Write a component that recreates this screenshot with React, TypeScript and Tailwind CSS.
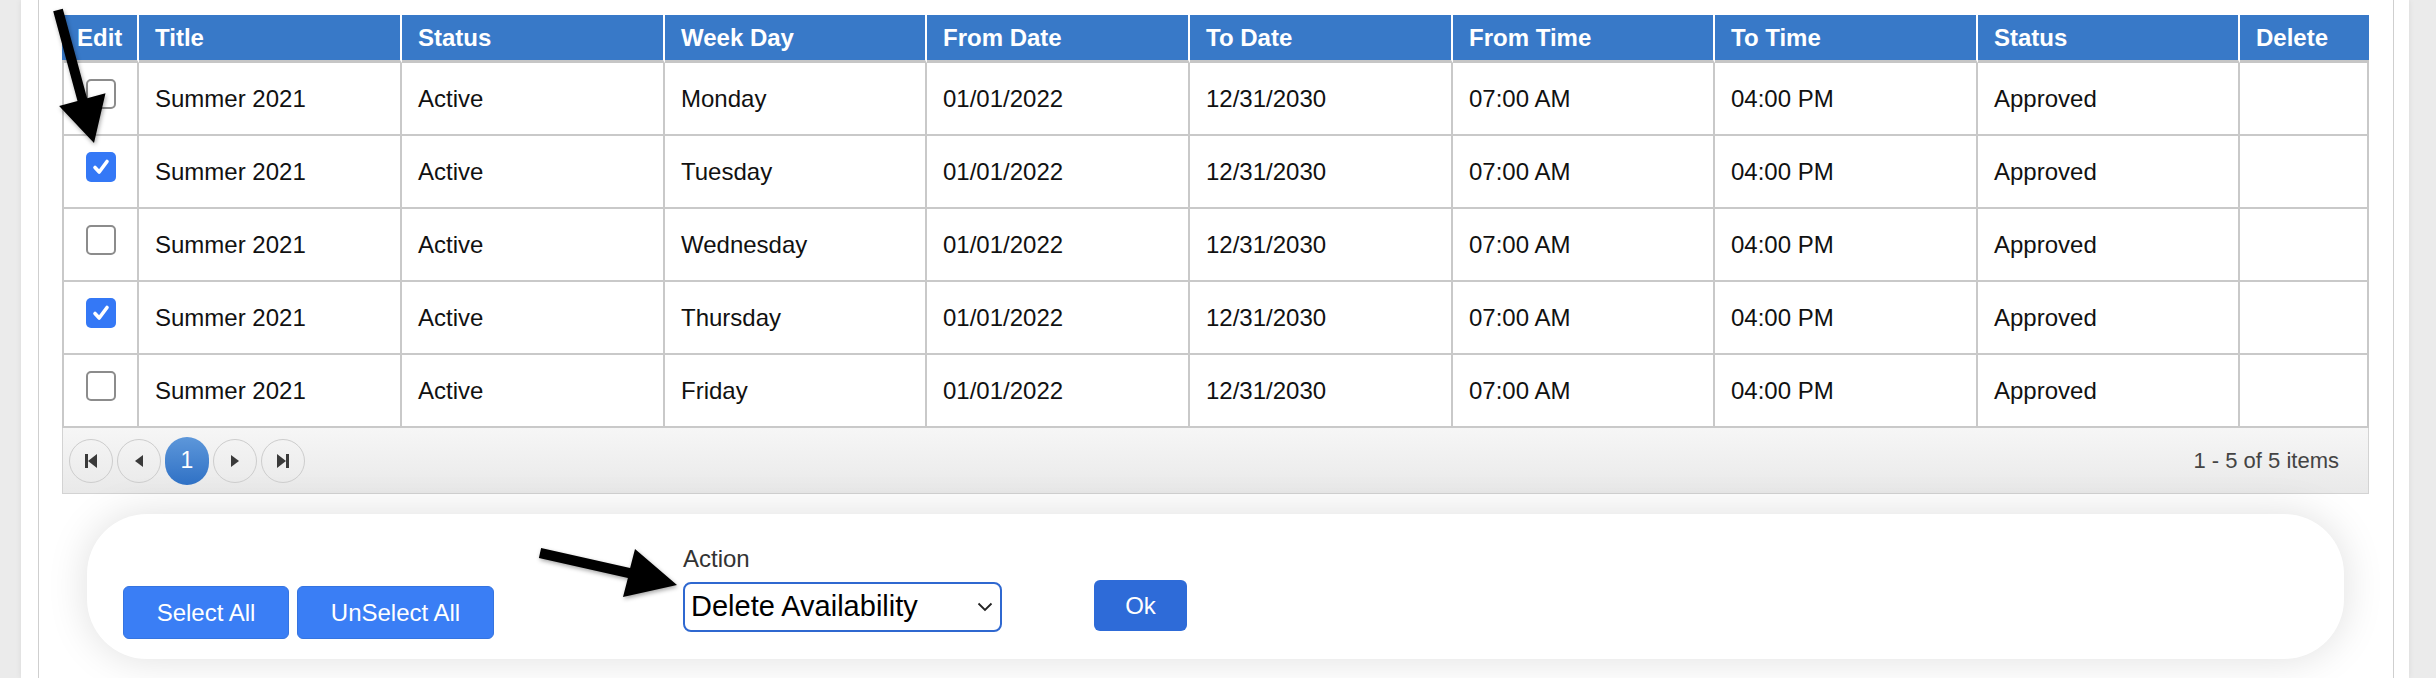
import React from 'react';

const FONT = "font-['Liberation_Sans','Helvetica_Neue',Arial,sans-serif]";

interface Row {
  checked: boolean;
  day: string;
}

const rows: Row[] = [
  { checked: false, day: 'Monday' },
  { checked: true, day: 'Tuesday' },
  { checked: false, day: 'Wednesday' },
  { checked: true, day: 'Thursday' },
  { checked: false, day: 'Friday' },
];

const headers = ['Edit', 'Title', 'Status', 'Week Day', 'From Date', 'To Date', 'From Time', 'To Time', 'Status', 'Delete'];
const widths = [77, 263, 263, 262, 263, 263, 262, 263, 262, 129];

const Checkbox: React.FC<{ checked: boolean }> = ({ checked }) =>
  checked ? (
    <span className="w-[30px] h-[30px] rounded-[5px] bg-[#3478f6] flex items-center justify-center">
      <svg width="20" height="20" viewBox="0 0 20 20">
        <path d="M4 10.5 L8.2 15 L16 4.5" fill="none" stroke="white" strokeWidth="3.6" strokeLinecap="round" strokeLinejoin="round" />
      </svg>
    </span>
  ) : (
    <span className="w-[30px] h-[30px] rounded-[5px] bg-white border-2 border-[#8c8c8c]" />
  );

const PagerButton: React.FC<{ children: React.ReactNode }> = ({ children }) => (
  <span className="w-[44px] h-[44px] rounded-full border border-[#cdcdcd] flex items-center justify-center">
    {children}
  </span>
);

const Arrows: React.FC = () => (
  <svg className="absolute left-0 top-0 pointer-events-none" width="2436" height="678" viewBox="0 0 2436 678">
    <g fill="#000" style={{ filter: 'drop-shadow(1px 2px 2px rgba(0,0,0,0.35))' }}>
      <polygon points="62.8,8.7 53.2,11.3 77.5,100.9 59.1,105.9 94,143 105.5,93.3 87.1,98.3" />
      <polygon points="541.1,548.1 538.9,557.9 627.9,577.9 623,597 677,585 635,549 630.1,568.1" />
    </g>
  </svg>
);

export default function App() {
  return (
    <div className={`relative w-[2436px] h-[678px] overflow-hidden bg-[#ebebeb] pl-[21px] pr-[27px] ${FONT}`}>
      <div className="h-full bg-white pl-[17px] pr-[15px] shadow-[0_0_6px_rgba(0,0,0,0.08)]">
        <div className="h-full border-x border-[#cfcfcf] pl-[23px] pr-[24px] pt-[15px]">
          {/* grid */}
          <table className="w-[2307px] table-fixed border-separate border-spacing-0">
            <colgroup>
              {widths.map((w, i) => (
                <col key={i} style={{ width: w }} />
              ))}
            </colgroup>
            <thead>
              <tr>
                {headers.map((h, i) => (
                  <th
                    key={i}
                    className={`h-[48px] bg-[#3879c8] text-white font-bold text-[24px] text-left align-middle pt-[1px] border-b-[3px] border-b-[#c6c6c6] ${
                      i === 0 ? 'pl-[15px]' : 'pl-[16px]'
                    } ${i < headers.length - 1 ? 'border-r-2 border-r-white' : ''}`}
                  >
                    {h}
                  </th>
                ))}
              </tr>
            </thead>
            <tbody>
              {rows.map((r, ri) => {
                const cells = ['Summer 2021', 'Active', r.day, '01/01/2022', '12/31/2030', '07:00 AM', '04:00 PM', 'Approved', ''];
                return (
                  <tr key={ri}>
                    <td className="h-[73px] border-l-2 border-r-2 border-b-2 border-[#c9c9c9] align-middle">
                      <div className="flex justify-center pb-[10px]">
                        <Checkbox checked={r.checked} />
                      </div>
                    </td>
                    {cells.map((c, ci) => (
                      <td
                        key={ci}
                        className="h-[73px] border-r-2 border-b-2 border-[#c9c9c9] pl-[16px] text-[24px] text-[#111] align-middle whitespace-nowrap"
                      >
                        {c}
                      </td>
                    ))}
                  </tr>
                );
              })}
            </tbody>
          </table>

          {/* pager */}
          <div className="w-[2307px] h-[66px] flex items-center justify-between border-x border-b border-[#d3d3d3] bg-gradient-to-b from-[#f6f6f6] to-[#e9e9e9] pl-[6px] pr-[29px]">
            <div className="flex items-center gap-[4px]">
              <PagerButton>
                <svg width="16" height="16" viewBox="0 0 16 16" fill="#3a3a3a">
                  <rect x="2" y="1" width="3" height="14" />
                  <polygon points="14,1 14,15 5,8" />
                </svg>
              </PagerButton>
              <PagerButton>
                <svg width="16" height="16" viewBox="0 0 16 16" fill="#3a3a3a">
                  <polygon points="12,2 12,14 4,8" />
                </svg>
              </PagerButton>
              <span className="w-[44px] h-[48px] rounded-full bg-gradient-to-b from-[#5d97da] to-[#2f71c5] text-white text-[23px] flex items-center justify-center">
                1
              </span>
              <PagerButton>
                <svg width="16" height="16" viewBox="0 0 16 16" fill="#3a3a3a">
                  <polygon points="4,2 4,14 12,8" />
                </svg>
              </PagerButton>
              <PagerButton>
                <svg width="16" height="16" viewBox="0 0 16 16" fill="#3a3a3a">
                  <polygon points="2,1 2,15 11,8" />
                  <rect x="11" y="1" width="3" height="14" />
                </svg>
              </PagerButton>
            </div>
            <span className="text-[22px] text-[#444]">1 - 5 of 5 items</span>
          </div>

          {/* action bar */}
          <div className="mt-[20px] mx-[25px] h-[145px] rounded-[60px] bg-white shadow-[0_0_40px_rgba(0,0,0,0.13)] flex items-end pl-[36px] pb-[20px]">
            <div className="flex gap-[8px]">
              <button className="w-[166px] h-[53px] rounded-[6px] bg-[#3a7ef5] border border-[#3574e0] text-white text-[24px]">
                Select All
              </button>
              <button className="w-[197px] h-[53px] rounded-[6px] bg-[#3a7ef5] border border-[#3574e0] text-white text-[24px]">
                UnSelect All
              </button>
            </div>
            <div className="ml-[189px] mb-[7px] flex flex-col">
              <span className="text-[24px] leading-[28px] text-[#333] mb-[9px]">Action</span>
              <div className="w-[319px] h-[50px] rounded-[8px] border-2 border-[#2f68d0] flex items-center justify-between pl-[6px] pr-[7px]">
                <span className="text-[29px] text-black">Delete Availability</span>
                <svg width="16" height="10" viewBox="0 0 16 10">
                  <path d="M1.5 1.5 L8 8 L14.5 1.5" fill="none" stroke="#222" strokeWidth="1.8" />
                </svg>
              </div>
            </div>
            <button className="ml-[92px] mb-[8px] w-[93px] h-[51px] rounded-[6px] bg-[#2e6bd8] text-white text-[24px]">
              Ok
            </button>
          </div>
        </div>
      </div>
      <Arrows />
    </div>
  );
}
